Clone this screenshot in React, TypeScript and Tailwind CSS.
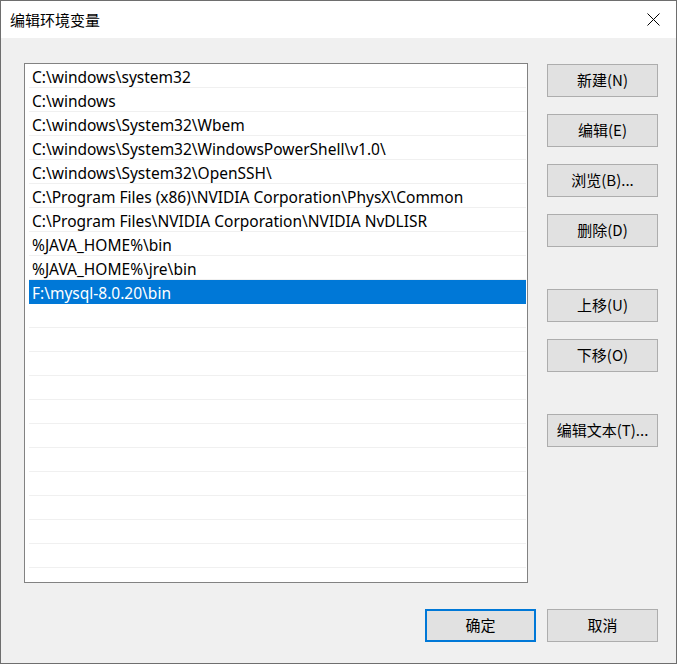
import React from "react";

const paths = [
  "C:\\windows\\system32",
  "C:\\windows",
  "C:\\windows\\System32\\Wbem",
  "C:\\windows\\System32\\WindowsPowerShell\\v1.0\\",
  "C:\\windows\\System32\\OpenSSH\\",
  "C:\\Program Files (x86)\\NVIDIA Corporation\\PhysX\\Common",
  "C:\\Program Files\\NVIDIA Corporation\\NVIDIA NvDLISR",
  "%JAVA_HOME%\\bin",
  "%JAVA_HOME%\\jre\\bin",
  "F:\\mysql-8.0.20\\bin",
];

const font = { fontFamily: '"Noto Sans CJK SC", "Noto Sans", sans-serif' };
const listFont = { fontFamily: '"Noto Sans", "Noto Sans CJK SC", sans-serif' };

function Btn({ label, primary }: { label: string; primary?: boolean }) {
  return (
    <button
      className={
        primary
          ? "w-[111px] h-[33px] bg-[#e1e1e1] border-2 border-[#0078d7] text-[15px] text-black flex items-center justify-center"
          : "w-[111px] h-[33px] bg-[#e1e1e1] border border-[#adadad] text-[15px] text-black flex items-center justify-center"
      }
    >
      {label}
    </button>
  );
}

export default function App() {
  const rows = Array.from({ length: 21 }, (_, i) => paths[i] ?? "");

  return (
    <div
      className="w-[677px] h-[664px] bg-[#f0f0f0] border border-[#6e6e6e] flex flex-col overflow-hidden"
      style={font}
    >
      {/* 標題列 */}
      <div className="h-[37px] bg-white flex items-center justify-between pl-[9px] pr-[14px] shrink-0">
        <span className="text-[15px] text-black leading-none">编辑环境变量</span>
        <svg width="13" height="13" viewBox="0 0 13 13" className="mr-[2px]">
          <path d="M0.5 0.5 L12.5 12.5 M12.5 0.5 L0.5 12.5" stroke="#000" strokeWidth="1" />
        </svg>
      </div>

      <div className="flex pl-[23px] pt-[25px] gap-[19px]">
        {/* 路徑清單 */}
        <div
          className="w-[504px] h-[520px] bg-white border border-[#828282] pl-[4px] pr-px overflow-hidden"
          style={listFont}
        >
          {rows.map((p, i) => (
            <div
              key={i}
              className={
                i === 9
                  ? "h-[24px] bg-[#0078d7] text-white text-[15.5px] pl-[3px] pt-[5px] flex items-center border-b border-[#0078d7] whitespace-nowrap"
                  : "h-[24px] text-black text-[15.5px] pl-[3px] pt-[5px] flex items-center border-b border-[#f0f0f0] whitespace-nowrap"
              }
            >
              {p}
            </div>
          ))}
        </div>

        {/* 右側按鈕 */}
        <div className="flex flex-col pt-px">
          <div className="flex flex-col gap-[17px]">
            <Btn label="新建(N)" />
            <Btn label="编辑(E)" />
            <Btn label="浏览(B)..." />
            <Btn label="删除(D)" />
          </div>
          <div className="flex flex-col gap-[17px] mt-[42px]">
            <Btn label="上移(U)" />
            <Btn label="下移(O)" />
          </div>
          <div className="mt-[42px]">
            <Btn label="编辑文本(T)..." />
          </div>
        </div>
      </div>

      <div className="flex justify-end gap-[11px] pr-[18px] mt-[26px]">
        <Btn label="确定" primary />
        <Btn label="取消" />
      </div>
    </div>
  );
}
